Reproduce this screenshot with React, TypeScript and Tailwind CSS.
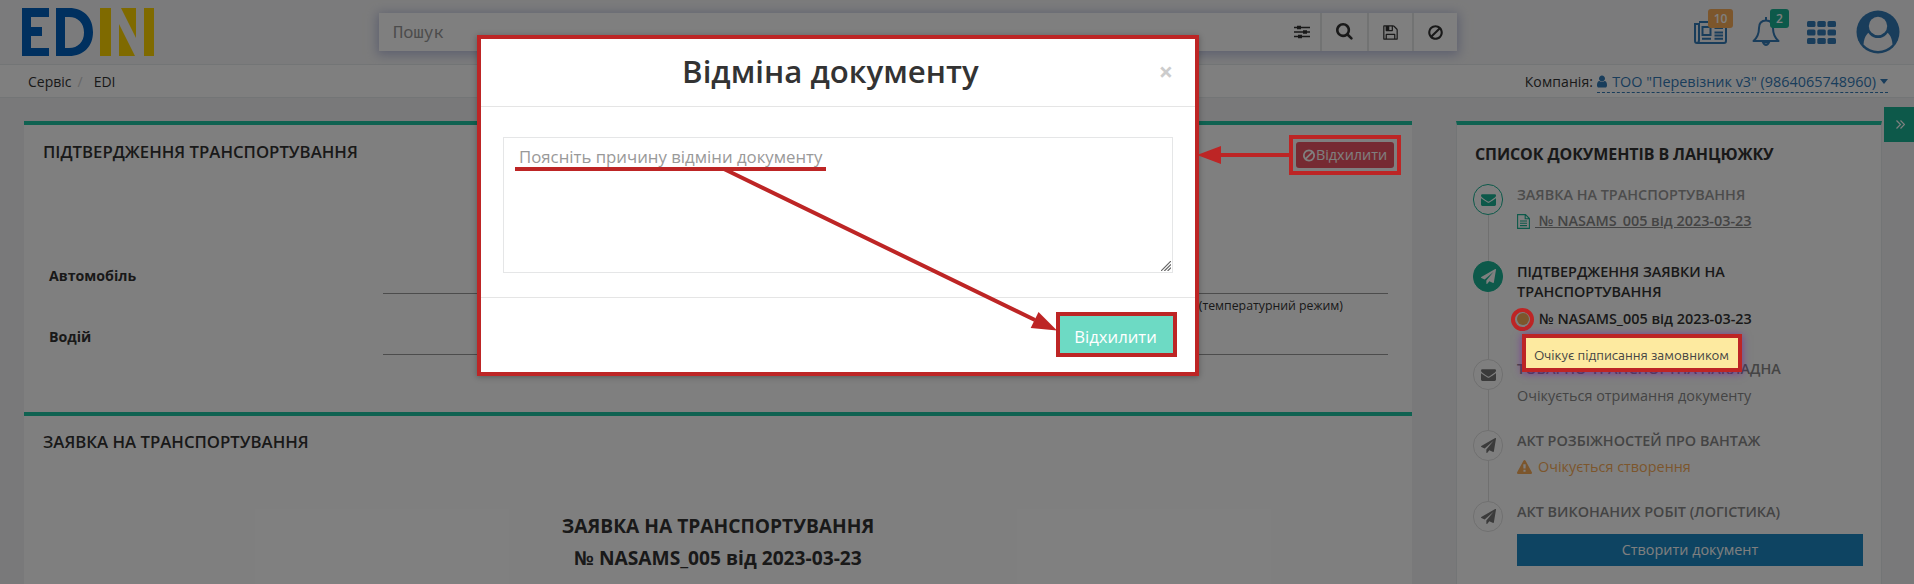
import type { ReactNode } from "react";

const glyphs = {
  search:
    "M1152 704q0-185-131.5-316.5t-316.5-131.5-316.5 131.5-131.5 316.5 131.5 316.5 316.5 131.5 316.5-131.5 131.5-316.5zm512 832q0 52-38 90t-90 38q-54 0-90-38l-343-342q-179 124-399 124-143 0-273.5-55.5t-225-150-150-225-55.5-273.5 55.5-273.5 150-225 225-150 273.5-55.5 273.5 55.5 225 150 150 225 55.5 273.5q0 220-124 399l343 343q37 37 37 90z",
  ban: "M1440 893q0-161-87-295l-754 753q137 89 297 89 111 0 211.5-43.5t173.5-116.5 116-174.5 43-212.5zm-999 299l755-754q-135-91-300-91-148 0-273 73t-198 199-73 274q0 162 89 299zm1223-299q0 157-61 300t-163.5 246-245 164-298.5 61-298.5-61-245-164-163.5-246-61-300 61-299.5 163.5-245.5 245-164 298.5-61 298.5 61 245 164 163.5 245.5 61 299.5z",
  plane:
    "M1764 11q33 24 27 64l-256 1536q-5 29-32 45-14 8-31 8-11 0-24-5l-453-185-242 295q-18 23-49 23-13 0-22-4-19-7-30.5-23.5t-11.5-36.5v-349l864-1059-1069 925-395-162q-37-14-40-55-2-40 32-59l1664-960q15-9 32-9 20 0 36 11z",
  envelope:
    "M1792 710v794q0 66-47 113t-113 47h-1472q-66 0-113-47t-47-113v-794q44 49 101 87 362 246 497 345 57 42 92.500 65.500t94.500 48 110 24.500h2q51 0 110-24.500t94.500-48 92.500-65.500q170-123 498-345 57-39 100-87zm0-294q0 79-49 151t-122 123q-376 261-468 325-10 7-42.500 31t-54 38-52 32.500-57.500 27-50 9h-2q-23 0-50-9t-57.500-27-52-32.500-54-38-42.500-31q-91-64-262-182.500t-205-142.500q-62-42-117-115.500t-51-136.500q0-78 41.500-130t118.500-52h1472q65 0 112.500 47t47.500 113z",
  floppy:
    "M512 1536h768v-384h-768v384zm896 0h128v-896q0-14-10-38.500t-20-34.500l-281-281q-10-10-34-20t-39-10v416q0 40-28 68t-68 28h-576q-40 0-68-28t-28-68v-416h-128v1280h128v-416q0-40 28-68t68-28h832q40 0 68 28t28 68v416zm-384-928v-320q0-13-9.500-22.500t-22.500-9.500h-192q-13 0-22.500 9.500t-9.500 22.500v320q0 13 9.500 22.500t22.500 9.500h192q13 0 22.500-9.500t9.500-22.500zm640 32v928q0 40-28 68t-68 28h-1344q-40 0-68-28t-28-68v-1344q0-40 28-68t68-28h928q40 0 88 20t76 48l280 280q28 28 48 76t20 88z",
  user: "M1536 1399q0 109-62.500 187t-150.500 78h-854q-88 0-150.500-78t-62.500-187q0-85 8.500-160.500t31.500-152 58.500-131 94-89 134.500-34.500q131 128 313 128t313-128q76 0 134.500 34.500t94 89 58.500 131 31.500 152 8.500 160.500zm-256-887q0 159-112.500 271.500t-271.500 112.500-271.500-112.500-112.500-271.500 112.500-271.500 271.500-112.500 271.500 112.500 112.500 271.500z",
  warning:
    "M1024 1375v-190q0-14-9.500-23.500t-22.500-9.500h-192q-13 0-22.500 9.500t-9.500 23.500v190q0 14 9.500 23.500t22.500 9.500h192q13 0 22.500-9.500t9.500-23.500zm-2-374l18-459q0-12-10-19-13-11-24-11h-220q-11 0-24 11-10 7-10 21l17 457q0 10 10 16.500t24 6.500h185q14 0 23.500-6.500t10.500-16.500zm-14-934l768 1408q35 63-2 126-17 29-46.500 46t-63.500 17h-1536q-34 0-63.500-17t-46.500-46q-37-63-2-126l768-1408q17-31 47-49t65-18 65 18 47 49z",
};

function Glyph({ name, className }: { name: keyof typeof glyphs; className: string }) {
  return (
    <svg viewBox="0 0 1792 1792" className={className} fill="currentColor">
      <path d={glyphs[name]} />
    </svg>
  );
}

function Logo() {
  return (
    <svg className="ml-[22px] mt-2 h-12 w-[132px] shrink-0" viewBox="0 0 132 48">
      <path fill="#0060be" d="M0 0H27V9H9V19H20V28H9V40H27V48H0Z" />
      <path fill="#0060be" fillRule="evenodd" d="M34 0H47C62 0 71 10 71 24S62 48 47 48H34ZM43 9V40H47C56 40 62 34 62 24.500S56 9 47 9Z" />
      <path fill="#ffd400" d="M78 0H89V48H78ZM97 16 113 48H97ZM99 0H114V30ZM122 0H132V48H122Z" />
    </svg>
  );
}

function Header() {
  return (
    <header className="flex h-[65px] border-b border-[#e7eaec] bg-[#f7f7f8]">
      <Logo />
      <div className="ml-[225px] mt-[13px] flex h-[38px] w-[1078px] shrink-0 bg-white text-[#333] shadow-[0_2px_10px_2px_rgba(140,150,200,0.55)]">
        <div className="flex flex-1 items-center pl-[14px] font-[Noto_Sans_Mono,Liberation_Mono,monospace] text-[17px] text-[#999]">
          Пошук
        </div>
        <div className="flex w-[26px] items-center">
          <svg className="h-[14px] w-4" viewBox="0 0 16 14" stroke="currentColor" fill="none">
            <path strokeWidth="1.300" d="M0 2.500H16M0 7H16M0 11.500H16" />
            <path strokeWidth="3.500" d="M3 2.500h4M9 7h4M4 11.500h4" />
          </svg>
        </div>
        <div className="flex w-[47px] items-center justify-center border-l-2 border-[#e5e6e7]">
          <Glyph name="search" className="h-[18px] w-[18px]" />
        </div>
        <div className="flex w-[45px] items-center justify-center border-l-2 border-[#e5e6e7]">
          <Glyph name="floppy" className="h-[17px] w-[17px]" />
        </div>
        <div className="flex w-[45px] items-center justify-center border-l-2 border-[#e5e6e7]">
          <Glyph name="ban" className="h-[17px] w-[17px]" />
        </div>
      </div>
      <div className="flex flex-1 text-[#337ab7]">
        <div className="relative ml-[237px] mt-[21px] h-6 w-[33px]">
          <svg className="h-[23px] w-[33px]" viewBox="0 0 33 23" fill="none" stroke="currentColor" strokeWidth="2">
            <path d="M5 1H32V20Q32 22 30 22H3Q1 22 1 20V3H5V19Q5 22 3 22M8.500 6h8v8h-8ZM20.500 7H29M20.500 11.500H29M20.500 14.500H29M8 17.800h9M20.500 17.800H29" />
          </svg>
          <span className="absolute -top-3 left-[14px] flex h-[19px] w-[25px] items-center justify-center rounded-[3px] bg-[#f8ac59] text-xs font-semibold text-white">
            10
          </span>
        </div>
        <div className="relative ml-[25px] mt-[17px] h-[29px] w-[28px]">
          <svg className="h-[29px] w-[28px]" viewBox="0 0 28 29" fill="none" stroke="currentColor" strokeWidth="2">
            <path d="M1.500 24C6 20 7 16 7 11C7 6 10 3.500 14 3.500S21 6 21 11C21 16 22 20 26.500 24Z" strokeLinejoin="round" />
            <path d="M14 0V3M11 25.500q1 2.500 3 2.500t3-2.500Z" />
          </svg>
          <span className="absolute -top-2 left-[18px] flex h-[19px] w-[19px] items-center justify-center rounded-[3px] bg-[#1ab394] text-xs font-semibold text-white">
            2
          </span>
        </div>
        <svg className="ml-[27px] mt-[21px] h-[23px] w-[29px]" viewBox="0 0 29 23" fill="currentColor">
          {[0, 8.5, 17].map((y) =>
            [0, 10.3, 20.5].map((x) => <rect key={`${x}-${y}`} x={x} y={y} width="8.500" height="6" rx="1.500" />),
          )}
        </svg>
        <svg className="ml-5 mt-[10px] h-11 w-11" viewBox="0 0 44 44">
          <circle cx="22" cy="22" r="21.500" fill="#337ab7" />
          <path d="M7.500 34.500C8 26 12 22 16 21.500H28C32 22 36 26 36.500 34.500A19.500 19.500 0 0 1 7.500 34.500Z" fill="#f7f7f8" />
          <circle cx="22" cy="16.500" r="11.500" fill="#337ab7" />
          <circle cx="22" cy="16" r="9.200" fill="#f7f7f8" />
        </svg>
      </div>
    </header>
  );
}

function Breadcrumbs() {
  return (
    <nav className="flex h-[33px] items-center justify-between border-b border-[#e7eaec] bg-white pl-[28px] pr-[26px] text-[14px] text-[#333]">
      <div className="flex">
        <span>Сервіс</span>
        <span className="ml-1.5 text-[#ccc]">/</span>
        <span className="ml-[11px]">EDI</span>
      </div>
      <div className="flex items-center">
        <span className="tracking-[0.1px]">Компанія:</span>
        <span className="ml-1 flex h-[21px] translate-y-px items-center border-b border-dashed border-[#337ab7] text-[#337ab7]">
          <Glyph name="user" className="-ml-0.5 h-[15px] w-[14px]" />
          <span className="ml-[3px] text-[14.4px]">ТОО "Перевізник v3" (9864065748960)</span>
          <span className="ml-1 border-x-4 border-t-[5px] border-x-transparent border-t-[#337ab7]" />
        </span>
      </div>
    </nav>
  );
}

function FieldRow({ label, note }: { label: string; note?: string }) {
  return (
    <div className="flex h-[61px]">
      <div className="w-[334px] text-[14.2px] leading-5 font-bold">{label}</div>
      <div className="flex-1">
        <div className="h-[28px] border-b border-[#999]" />
        {note && <div className="pr-[45px] pt-[2px] text-right text-[12.3px] leading-5">{note}</div>}
      </div>
    </div>
  );
}

function MainColumn() {
  return (
    <main className="flex w-[1388px] flex-col bg-white text-[#333]">
      <section className="h-[291px] border-t-4 border-[#1ec5a2]">
        <div className="flex h-[141px] justify-between pl-[19px] pr-[18px] pt-[17px]">
          <h2 className="-mt-px text-[16.75px] leading-[21px] font-semibold">ПІДТВЕРДЖЕННЯ ТРАНСПОРТУВАННЯ</h2>
          <button className="flex h-[26px] w-[98px] items-center justify-center rounded-[3px] bg-[#ed5565] pr-px text-[14.4px] text-white">
            <Glyph name="ban" className="h-[15px] w-[14px]" />
            Відхилити
          </button>
        </div>
        <div className="pl-[25px] pr-6">
          <FieldRow label="Автомобіль" note="(температурний режим)" />
          <FieldRow label="Водій" />
        </div>
      </section>
      <section className="flex-1 border-t-4 border-[#1ec5a2]">
        <h2 className="pl-[19px] pt-[15px] text-[16.75px] leading-[22px] font-semibold">ЗАЯВКА НА ТРАНСПОРТУВАННЯ</h2>
        <div className="pt-[57px] text-center text-[19.2px] leading-8 font-bold">
          ЗАЯВКА НА ТРАНСПОРТУВАННЯ
          <br />№ NASAMS_005 від 2023-03-23
        </div>
      </section>
    </main>
  );
}

function Step({
  height,
  icon,
  marker,
  last,
  children,
}: {
  height: string;
  icon: "envelope" | "plane";
  marker: string;
  last?: boolean;
  children: ReactNode;
}) {
  return (
    <li className={`flex ${height}`}>
      <div className="flex w-[30px] shrink-0 flex-col items-center">
        <div className={`flex h-[31px] w-[30px] shrink-0 items-center justify-center rounded-full border ${marker}`}>
          <Glyph name={icon} className="h-[15px] w-[15px]" />
        </div>
        {!last && <div className="w-px flex-1 bg-[#e0e0e0]" />}
      </div>
      <div className="ml-[14px] flex-1 text-[14.4px] leading-5">{children}</div>
    </li>
  );
}

function DocumentChain() {
  return (
    <aside className="ml-11 w-[426px] border-x border-t-4 border-x-[#e7eaec] border-t-[#1ec5a2] bg-white pl-4 pr-[18px] text-[#333]">
      <h2 className="pl-0.5 pt-[18px] text-[16px] leading-[22px] font-bold tracking-[-0.1px]">СПИСОК ДОКУМЕНТІВ В ЛАНЦЮЖКУ</h2>
      <ul className="mt-[19px]">
        <Step height="h-[77px]" icon="envelope" marker="border-[#1ab394] text-[#1ab394]">
          <div className="pt-px font-semibold text-[#999]">ЗАЯВКА НА ТРАНСПОРТУВАННЯ</div>
          <div className="mt-1.5 flex items-center text-[#888]">
            <svg className="h-[15px] w-[13px] text-[#1ab394]" viewBox="0 0 13 15" fill="none" stroke="currentColor" strokeWidth="1.100">
              <path d="M.6.6H8.500L12.400 4.500V14.400H.6ZM8.200.6V4.800H12.400M3 7H10M3 9.300H10M3 11.600H10" />
            </svg>
            <span className="ml-[5px] whitespace-pre font-semibold underline"> № NASAMS_005 від 2023-03-23</span>
          </div>
        </Step>
        <Step height="h-[98px]" icon="plane" marker="border-[#1ab394] bg-[#1ab394] text-white">
          <div className="pt-px font-semibold">
            ПІДТВЕРДЖЕННЯ ЗАЯВКИ НА
            <br />
            ТРАНСПОРТУВАННЯ
          </div>
          <div className="mt-[7px] flex items-center font-semibold">
            <span className="h-3 w-3 rounded-full bg-[#f8ac59]" />
            <span className="ml-[10px]">№ NASAMS_005 від 2023-03-23</span>
          </div>
        </Step>
        <Step height="h-[71px]" icon="envelope" marker="border-[#e0e0e0] text-[#777]">
          <div className="font-semibold text-[#888]">ТОВАРНО-ТРАНСПОРТНА НАКЛАДНА</div>
          <div className="mt-[7px] text-[#888]">Очікується отримання документу</div>
        </Step>
        <Step height="h-[71px]" icon="plane" marker="border-[#e0e0e0] text-[#777]">
          <div className="pt-px font-semibold text-[#888]">АКТ РОЗБІЖНОСТЕЙ ПРО ВАНТАЖ</div>
          <div className="mt-1.5 flex items-center text-[#f8ac59]">
            <Glyph name="warning" className="h-[15px] w-[15px]" />
            <span className="ml-1.5">Очікується створення</span>
          </div>
        </Step>
        <Step height="h-[71px]" icon="plane" marker="border-[#e0e0e0] text-[#777]" last>
          <div className="pt-px font-semibold text-[#888]">АКТ ВИКОНАНИХ РОБІТ (ЛОГІСТИКА)</div>
          <button className="mt-3 h-8 w-full bg-[#1c88c4] text-white">Створити документ</button>
        </Step>
      </ul>
    </aside>
  );
}

function CancelDialog() {
  return (
    <div className="absolute left-[477px] top-[35px] flex h-[341px] w-[722px] flex-col border-4 border-[#bd2525] bg-white text-[#333] shadow-[0_1px_6px_rgba(0,0,0,0.3)]">
      <div className="flex h-[68px] shrink-0 items-center border-b border-[#e5e5e5] pb-[3px] pr-[22px]">
        <h1 className="flex-1 pl-[21px] text-center text-[31.2px] leading-10 font-semibold">Відміна документу</h1>
        <span className="text-[25px] leading-5 font-bold text-[#ccc]">×</span>
      </div>
      <div className="relative px-[22px] pt-[30px]">
        <textarea
          className="block h-[136px] w-[670px] resize-none border border-[#e5e6e7] px-[15px] py-[7px] text-[16.8px] leading-[23px] placeholder:text-[#999]"
          placeholder="Поясніть причину відміни документу"
        />
        <svg className="absolute bottom-0.5 right-6 h-[10px] w-[10px]" viewBox="0 0 10 10" stroke="#666" strokeWidth="1.200">
          <path d="M0 10 10 0M3.300 10 10 3.300M6.600 10 10 6.600" />
        </svg>
      </div>
      <div className="mt-6 flex flex-1 justify-end border-t border-[#e5e5e5] pr-[18px] pt-[14px]">
        <button className="h-[45px] w-[121px] border-4 border-[#bd2525] bg-[#6ddac4] pr-0.5 pt-1 text-[16.7px] text-white">Відхилити</button>
      </div>
    </div>
  );
}

function Annotations() {
  return (
    <>
      <div className="absolute left-[1289px] top-[135px] h-10 w-28 border-4 border-[#bd2525]" />
      <div className="absolute left-[1511px] top-[308px] h-[23px] w-[23px] rounded-full border-4 border-[#bd2525]" />
      <svg className="absolute left-0 top-0 h-[584px] w-[1914px]" viewBox="0 0 1914 584" stroke="#bd2525" fill="#bd2525">
        <path strokeWidth="4" d="M515 169H826M724 169L1035 320M1220 155H1289" />
        <path stroke="none" d="M1057 330.500L1038.500 312L1030.700 328ZM1197 155L1221 146V164Z" />
      </svg>
      <div className="absolute left-[1522px] top-[334px] flex h-[38px] w-[220px] items-center justify-center border-4 border-[#bd2525] bg-[#fdeaa0] pr-px pt-1.5 font-[Ubuntu,Noto_Sans,sans-serif] text-[13.4px] whitespace-nowrap text-[#444] shadow-[0_1px_8px_rgba(120,30,160,0.7)]">
        Очікує підписання замовником
      </div>
    </>
  );
}

export default function App() {
  return (
    <div className="relative h-[584px] w-[1914px] overflow-hidden bg-[#f3f3f4] font-['Open_Sans',sans-serif]">
      <Header />
      <Breadcrumbs />
      <div className="flex h-[486px] pl-6 pt-[23px]">
        <MainColumn />
        <DocumentChain />
      </div>
      <div className="absolute right-0 top-[107px] flex h-[35px] w-[30px] items-center justify-center bg-[#1ab394] pl-0.5 text-white">
        <svg className="h-[9px] w-[9px]" viewBox="0 0 9 9" fill="none" stroke="currentColor" strokeWidth="1.200">
          <path d="M.5.500 4.500 4.500.5 8.500M4.500.500 8.500 4.500 4.500 8.500" />
        </svg>
      </div>
      <div className="absolute inset-0 bg-black/50" />
      <CancelDialog />
      <Annotations />
    </div>
  );
}
